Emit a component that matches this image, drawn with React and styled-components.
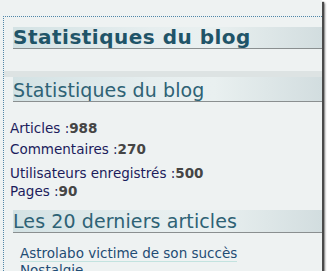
import React from "react";
import styled, { createGlobalStyle } from "styled-components";

const Global = createGlobalStyle`
  html, body { margin: 0; padding: 0; background: #ffffff; }
  body { font-family: "DejaVu Sans", "Liberation Sans", sans-serif; }
`;

const Frame = styled.div`
  width: 322px;
  height: 271px;
  background: #eef2f2;
  box-shadow: 2px 2px 1px #4a4a4a, 3px 3px 2px #888;
  overflow: hidden;
  padding-top: 16px;
  box-sizing: border-box;
`;

const Panel = styled.div`
  margin-left: 3px;
  border-top: 1px dotted #4f86a8;
  border-left: 1px dotted #4f86a8;
  height: 100%;
  box-sizing: border-box;
`;

const Widget = styled.div`
  padding-top: 10px;
`;

const Section = styled.div`
  margin-top: 22px;
  padding-top: 6px;
  background: linear-gradient(#dde3e3 0, #dde3e3 6px, #eef2f2 6px);
`;

const Heading = styled.h2`
  margin: ${(p) => p.$mt}px 0 0 9px;
  height: ${(p) => p.$h}px;
  line-height: ${(p) => p.$h}px;
  font-size: ${(p) => p.$size}px;
  font-weight: ${(p) => (p.$bold ? 700 : 400)};
  color: ${(p) => (p.$bold ? "#1f5468" : "#2e6275")};
  letter-spacing: ${(p) => p.$ls}px;
  white-space: nowrap;
  background: linear-gradient(90deg, #d3e2e4 0%, #e6eeef 45%, #e9f0f0 65%, #d2dddf 100%);
  border-bottom: 1px solid #8a8f90;
  padding-top: ${(p) => p.$pt}px;
`;

const Stats = styled.div`
  padding-left: 6px;
  padding-top: 17px;
  font-size: 13.5px;
`;

const StatRow = styled.div`
  line-height: 18px;
  margin-top: ${(p) => p.$mt}px;
  color: #1c1c5c;
  white-space: nowrap;
`;

const Value = styled.b`
  color: #454545;
`;

const Links = styled.ul`
  list-style: none;
  margin: 0;
  padding: 12px 0 0 16px;
  font-size: 13.5px;
`;

const LinkItem = styled.li`
  line-height: 17px;
`;

const Link = styled.a`
  color: #1f4c74;
  text-decoration: none;
  border-bottom: 1px solid ${(p) => (p.$line ? "#c3e3e0" : "transparent")};
`;

export default function App() {
  return (
    <>
      <Global />
      <Frame>
        <Panel>
          <Widget>
            <Heading $mt={0} $h={21} $size={20} $bold $ls={0.5} $pt={0}>
              Statistiques du blog
            </Heading>
          </Widget>
          <Section>
            <Heading $mt={0} $h={21} $size={19} $ls={0.1} $pt={3}>
              Statistiques du blog
            </Heading>
            <Stats>
              <StatRow $mt={0}>
                Articles :<Value>988</Value>
              </StatRow>
              <StatRow $mt={3}>
                Commentaires :<Value>270</Value>
              </StatRow>
              <StatRow $mt={6}>
                Utilisateurs enregistrés :<Value>500</Value>
              </StatRow>
              <StatRow $mt={0}>
                Pages :<Value>90</Value>
              </StatRow>
            </Stats>
            <Heading $mt={10} $h={22} $size={19} $ls={0.1} $pt={0}>
              Les 20 derniers articles
            </Heading>
            <Links>
              <LinkItem>
                <Link href="#" $line>Astrolabo victime de son succès</Link>
              </LinkItem>
              <LinkItem>
                <Link href="#">Nostalgie</Link>
              </LinkItem>
            </Links>
          </Section>
        </Panel>
      </Frame>
    </>
  );
}
